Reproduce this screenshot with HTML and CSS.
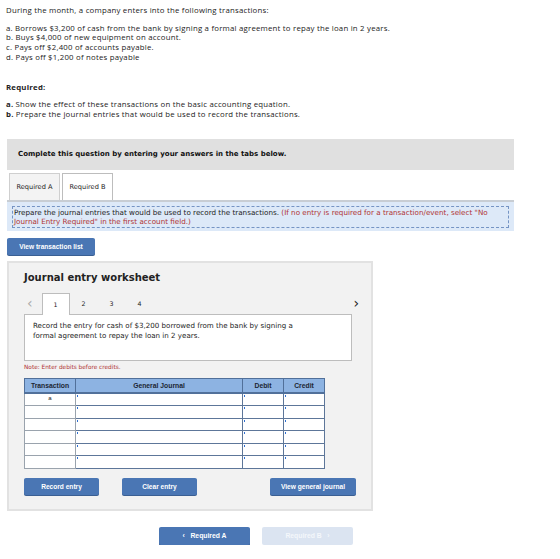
FILE: index.html
```html
<!DOCTYPE html>
<html lang="en">
  <head>
    <meta charset="UTF-8" />
    <title>Journal entries</title>
    <link rel="stylesheet" href="styles.css">
  </head>
  <body>
    <div class="question">
      <p class="lead">During the month, a company enters into the following transactions:</p>
      <ul class="items">
        <li>a. Borrows $3,200 of cash from the bank by signing a formal agreement to repay the loan in 2 years.</li>
        <li>b. Buys $4,000 of new equipment on account.</li>
        <li>c. Pays off $2,400 of accounts payable.</li>
        <li>d. Pays off $1,200 of notes payable</li>
      </ul>
      <p class="required-title">Required:</p>
      <ul class="items">
        <li><b>a.</b> Show the effect of these transactions on the basic accounting equation.</li>
        <li><b>b.</b> Prepare the journal entries that would be used to record the transactions.</li>
      </ul>
    </div>

    <div class="prompt-bar">Complete this question by entering your answers in the tabs below.</div>

    <div class="tabs">
      <div class="tab">Required A</div>
      <div class="tab active">Required B</div>
    </div>

    <div class="instructions">
      <div class="instructions-inner">
        Prepare the journal entries that would be used to record the transactions.
        <span class="hint">(If no entry is required for a transaction/event, select "No Journal Entry Required" in the first account field.)</span>
      </div>
    </div>

    <button class="btn btn-list">View transaction list</button>

    <div class="worksheet">
      <h2 class="worksheet-title">Journal entry worksheet</h2>

      <div class="pager">
        <span class="arrow arrow-prev">&lsaquo;</span>
        <span class="page current">1</span>
        <span class="page">2</span>
        <span class="page">3</span>
        <span class="page">4</span>
        <span class="arrow arrow-next">&rsaquo;</span>
      </div>

      <div class="entry-desc">
        Record the entry for cash of $3,200 borrowed from the bank by signing a formal agreement to repay the loan in 2 years.
      </div>

      <p class="note">Note: Enter debits before credits.</p>

      <table class="journal">
        <thead>
          <tr>
            <th class="col-tx">Transaction</th>
            <th class="col-gj">General Journal</th>
            <th class="col-amt">Debit</th>
            <th class="col-amt">Credit</th>
          </tr>
        </thead>
        <tbody>
          <tr><td class="tx">a</td><td class="cell"></td><td class="cell"></td><td class="cell"></td></tr>
          <tr><td class="tx"></td><td class="cell"></td><td class="cell"></td><td class="cell"></td></tr>
          <tr><td class="tx"></td><td class="cell"></td><td class="cell"></td><td class="cell"></td></tr>
          <tr><td class="tx"></td><td class="cell"></td><td class="cell"></td><td class="cell"></td></tr>
          <tr><td class="tx"></td><td class="cell"></td><td class="cell"></td><td class="cell"></td></tr>
          <tr><td class="tx"></td><td class="cell"></td><td class="cell"></td><td class="cell"></td></tr>
        </tbody>
      </table>

      <div class="worksheet-actions">
        <button class="btn btn-record">Record entry</button>
        <button class="btn btn-clear">Clear entry</button>
        <button class="btn btn-view">View general journal</button>
      </div>
    </div>

    <div class="step-nav">
      <button class="btn btn-step">&lsaquo;&nbsp;&nbsp; Required A</button>
      <button class="btn btn-step disabled">Required B &nbsp;&nbsp;&rsaquo;</button>
    </div>
  </body>
</html>
```

FILE: styles.css
```css
* {
  margin: 0;
  padding: 0;
  box-sizing: border-box;
}

body {
  background-color: white;
  font-family: "Open Sans", "Liberation Sans", sans-serif;
  color: #222;
}

/* Question text */
.question {
  padding: 6px 6px 0;
  font-size: 7.8px;
  letter-spacing: 0.22px;
  line-height: 9.7px;
}

.lead {
  margin-bottom: 8px;
}

.items {
  list-style: none;
}

.required-title {
  font-weight: bold;
  margin: 20px 0 8px;
}

/* Gray prompt */
.prompt-bar {
  margin: 19px 0 0 7px;
  width: 507px;
  height: 31px;
  background-color: #e0e0e0;
  display: flex;
  align-items: center;
  padding-left: 11px;
  font-family: "DejaVu Sans", sans-serif;
  font-weight: bold;
  font-size: 7px;
  color: #111;
}

/* Tabs */
.tabs {
  display: flex;
  gap: 2px;
  margin: 3px 0 0 9px;
}

.tab {
  width: 51px;
  height: 27px;
  display: flex;
  align-items: center;
  justify-content: center;
  font-family: "DejaVu Sans", sans-serif;
  font-size: 6.6px;
  color: #222;
  background-color: #f3f3f3;
  border: 1px solid #cfcfcf;
  border-bottom: none;
}

.tab.active {
  background-color: white;
  border-color: #bdbdbd;
}

/* Instruction box */
.instructions {
  margin-left: 7px;
  width: 507px;
  background-color: #dde9f8;
  border-top: 2px solid #c8cdd3;
  padding: 4px 5px 3px;
}

.instructions-inner {
  border: 1px dashed #7594c4;
  padding: 1px 1px;
  font-family: "DejaVu Sans", sans-serif;
  font-size: 7.2px;
  line-height: 9px;
  color: #222;
}

.hint {
  color: #b03333;
}

/* Buttons */
.btn {
  border: none;
  background-color: #4a76b4;
  color: white;
  font-family: "Liberation Sans", Arial, sans-serif;
  font-weight: bold;
  font-size: 6.6px;
  height: 17px;
  border-radius: 2px;
  box-shadow: 0 1px 0 #3a5f93;
}

.btn-list {
  display: block;
  margin: 7px 0 0 7px;
  width: 88px;
}

/* Worksheet panel */
.worksheet {
  margin: 6px 0 0 7px;
  width: 366px;
  height: 250px;
  background-color: #f2f2f2;
  border: 2px solid #e2e2e2;
  padding: 9px 0 0 15px;
}

.worksheet-title {
  font-family: "DejaVu Sans", sans-serif;
  font-size: 10px;
  font-weight: bold;
  color: #222;
}

.pager {
  display: flex;
  align-items: flex-end;
  margin-top: 9px;
  height: 22px;
  width: 335px;
  font-family: "DejaVu Sans", sans-serif;
  font-size: 6.3px;
  color: #222;
}

.arrow {
  font-size: 14px;
  line-height: 14px;
  color: #aaa;
  align-self: center;
  margin-left: 3px;
}

.arrow-next {
  margin-left: auto;
  margin-right: 0;
  color: #222;
}

.page {
  width: 28px;
  height: 21px;
  display: flex;
  align-items: center;
  justify-content: center;
}

.page.current {
  margin-left: 9px;
  background-color: white;
  border: 1px solid #bdbdbd;
  border-bottom: none;
  height: 22px;
  position: relative;
  z-index: 1;
  margin-bottom: -1px;
}

.entry-desc {
  width: 328px;
  height: 47px;
  background-color: white;
  border: 1px solid #bdbdbd;
  padding: 6px 42px 6px 8px;
  font-family: "DejaVu Sans", sans-serif;
  font-size: 7.1px;
  line-height: 10px;
  color: #222;
}

.note {
  margin-top: 3px;
  font-family: "DejaVu Sans", sans-serif;
  font-size: 5.8px;
  color: #b03333;
}

/* Journal table */
.journal {
  margin-top: 8px;
  border-collapse: collapse;
  width: 301px;
  border: 1px solid #9aa3ad;
}

.journal th {
  background-color: #8db3e2;
  height: 15px;
  font-family: "Liberation Sans", Arial, sans-serif;
  font-size: 6.8px;
  font-weight: bold;
  color: #1c2633;
  border: 1px solid #51709a;
  border-bottom-width: 2px;
}

.col-tx {
  width: 51px;
}

.col-amt {
  width: 41px;
}

.journal tbody tr {
  height: 12.5px;
}

.journal td {
  background-color: white;
  border: 1px solid #9aa3ad;
  font-family: "Liberation Sans", Arial, sans-serif;
  font-size: 6px;
  line-height: 8px;
}

.journal td.tx {
  text-align: center;
  vertical-align: top;
}

.journal td.cell {
  border: 1.5px solid #5d7699;
  background-image: linear-gradient(#2f6fd0, #2f6fd0);
  background-size: 1px 2px;
  background-position: 1px 1px;
  background-repeat: no-repeat;
}

.worksheet-actions {
  display: flex;
  margin-top: 9px;
  width: 332px;
}

.btn-record,
.btn-clear {
  width: 75px;
}

.btn-clear {
  margin-left: 23px;
}

.btn-view {
  margin-left: auto;
  width: 86px;
}

/* Step navigation */
.step-nav {
  display: flex;
  gap: 12px;
  margin: 16px 0 0 159px;
}

.btn-step {
  width: 91px;
  height: 18px;
  font-size: 6.8px;
}

.btn-step.disabled {
  background-color: #dbe4f1;
  box-shadow: none;
  color: #f4f7fb;
}
```
